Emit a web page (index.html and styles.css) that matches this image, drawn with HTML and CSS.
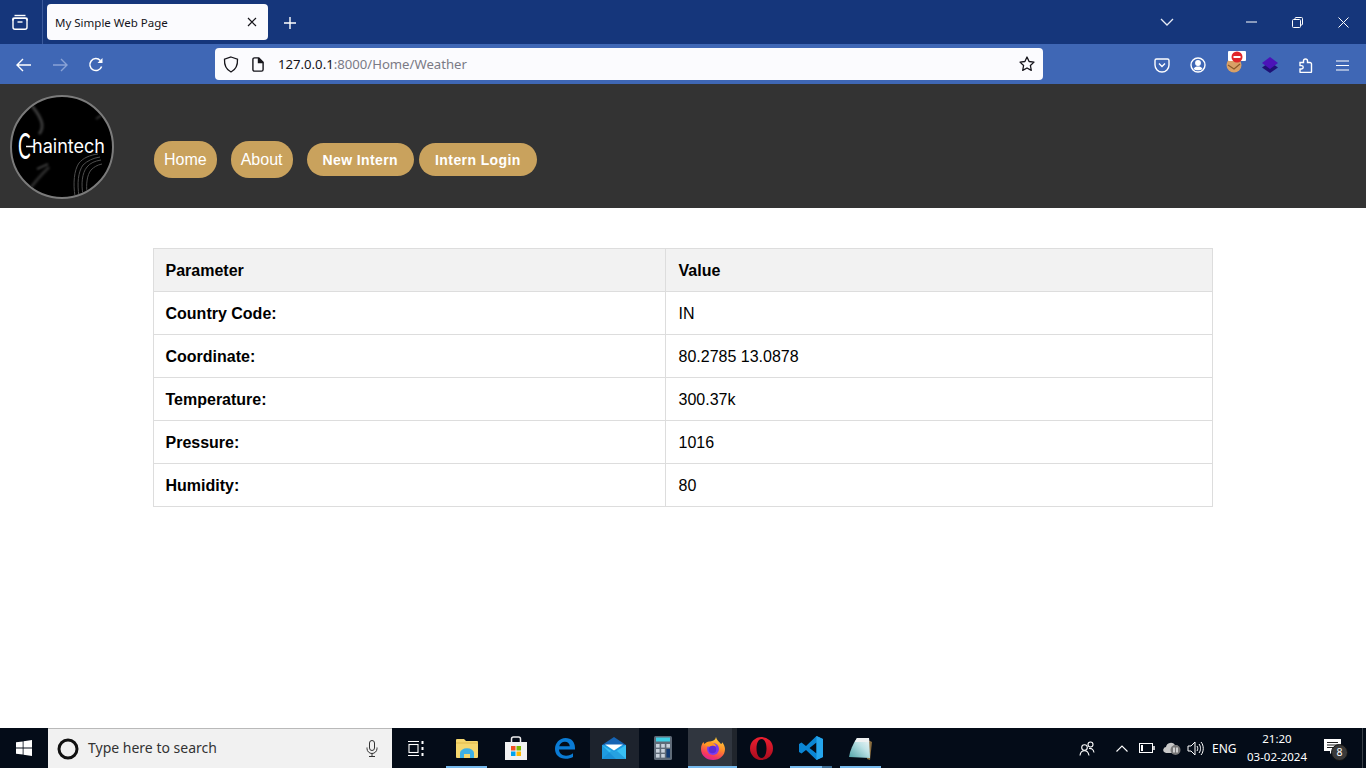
FILE: index.html
```html
<!DOCTYPE html>
<html lang="en">
<head>
<meta charset="utf-8">
<title>My Simple Web Page</title>
<link rel="stylesheet" href="styles.css">
</head>
<body>
<div class="screen">
  <div class="tabstrip">
    <div class="tabs-view"><svg width="18" height="18" viewBox="0 0 18 18" fill="none" stroke="#fff" stroke-width="1.4"><path d="M3.500 2.500h11"/><path d="M2.200 7.600a2 2 0 0 1 0-2.400h13.600a2 2 0 0 1 0 2.400"/><rect x="2" y="5.200" width="14" height="11" rx="2"/><path d="M6.500 9h5"/></svg></div>
    <div class="tab"><span class="tab-title">My Simple Web Page</span><svg class="tab-close" width="10" height="10" viewBox="0 0 10 10" stroke="#15141a" stroke-width="1.2"><path d="M1 1l8 8M9 1l-8 8"/></svg></div>
    <div class="newtab"><svg width="14" height="14" viewBox="0 0 14 14" stroke="#fff" stroke-width="1.4"><path d="M7 1v12M1 7h12"/></svg></div>
    <div class="chevron"><svg width="14" height="8" viewBox="0 0 14 8" fill="none" stroke="#e8ecf5" stroke-width="1.3"><path d="M1 1l6 6 6-6"/></svg></div>
    <div class="winbtn"><svg width="11" height="2" viewBox="0 0 11 2" stroke="#fff"><path d="M0 1h11"/></svg></div>
    <div class="winbtn"><svg width="11" height="11" viewBox="0 0 11 11" fill="none" stroke="#fff"><rect x="0.5" y="2.5" width="8" height="8" rx="1"/><path d="M3 2.500V1.500a1 1 0 0 1 1-1h5.500a1 1 0 0 1 1 1V7a1 1 0 0 1-1 1h-1"/></svg></div>
    <div class="winbtn"><svg width="11" height="11" viewBox="0 0 11 11" stroke="#fff"><path d="M.5.5l10 10M10.500.5l-10 10"/></svg></div>
  </div>

  <div class="toolbar">
    <div class="tbtn"><svg width="16" height="14" viewBox="0 0 16 14" fill="none" stroke="#fff" stroke-width="1.4"><path d="M15 7H1.500M7 1L1 7l6 6"/></svg></div>
    <div class="tbtn"><svg width="16" height="14" viewBox="0 0 16 14" fill="none" stroke="#8aa3d6" stroke-width="1.4"><path d="M1 7h13.500M9 1l6 6-6 6"/></svg></div>
    <div class="tbtn"><svg width="16" height="16" viewBox="0 0 16 16" fill="none" stroke="#fff" stroke-width="1.5"><path d="M13.600 9.500A6 6 0 1 1 12.300 3.500"/><path d="M14.500 1v5h-5z" fill="#fff" stroke="none"/></svg></div>
    <div class="urlbar">
      <svg class="shield" width="16" height="17" viewBox="0 0 16 17" fill="none" stroke="#15141a" stroke-width="1.3"><path d="M8 1l6.500 2.200c.3 5.800-1.600 10.300-6.500 12.800C3.100 13.500 1.200 9 1.500 3.200z"/></svg>
      <svg class="page" width="12" height="15" viewBox="0 0 12 15" fill="none" stroke="#15141a" stroke-width="1.4"><path d="M2.500.9h4.300l4.300 4.300v7.300a1.600 1.600 0 0 1-1.600 1.600H2.500A1.600 1.600 0 0 1 .9 12.500V2.500A1.600 1.600 0 0 1 2.500.9z"/><path d="M6.500.9v4.600h4.600" fill="#15141a"/></svg>
      <span class="url"><span class="url-host">127.0.0.1</span>:8000/Home/Weather</span>
      <svg class="star" width="16" height="16" viewBox="0 0 16 16" fill="none" stroke="#15141a" stroke-width="1.3" stroke-linejoin="round"><path d="M8 1l2.100 4.500 4.900.6-3.600 3.400.9 4.900L8 12l-4.300 2.400.9-4.900L1 6.100l4.900-.6z"/></svg>
    </div>
    <div class="tools">
      <div class="tbtn"><svg width="16" height="15" viewBox="0 0 16 15" fill="none" stroke="#fff" stroke-width="1.4"><path d="M2.500 1h11A1.500 1.500 0 0 1 15 2.500V7a7 7 0 0 1-14 0V2.500A1.500 1.500 0 0 1 2.500 1z"/><path d="M5 5.500l3 3 3-3"/></svg></div>
      <div class="tbtn"><svg width="16" height="16" viewBox="0 0 16 16" fill="none" stroke="#fff" stroke-width="1.400"><circle cx="8" cy="8" r="7"/><circle cx="8" cy="6" r="2.200" fill="#fff"/><path d="M3.500 12c1-2 2.500-2.500 4.500-2.500s3.500.5 4.500 2.500c-2 1.700-7 1.700-9 0z" fill="#fff" stroke="none"/></svg></div>
      <div class="tbtn ext-btn"><svg width="24" height="22" viewBox="0 0 24 22"><circle cx="12" cy="14" r="7.500" fill="#d9a066"/><path d="M6 14l6 4 6-5" fill="none" stroke="#8a5a2b" stroke-width="1.200"/><rect x="6" y="0" width="18" height="10" rx="1" fill="#fff"/><circle cx="15" cy="6" r="5.500" fill="#e0262b"/><rect x="11.500" y="5" width="7" height="2" fill="#fff"/></svg></div>
      <div class="tbtn"><svg width="16" height="16" viewBox="0 0 16 16"><path d="M8 5L16 10.500 8 16 0 10.500z" fill="#1f1075"/><path d="M8 0L16 6 8 12 0 6z" fill="#4b12b8"/></svg></div>
      <div class="tbtn"><svg width="14" height="16" viewBox="0 0 14 16" fill="none" stroke="#fff" stroke-width="1.4"><path d="M1 5.500h3.500V4a2 2 0 1 1 4 0v1.500h2.500a1.500 1.500 0 0 1 1.500 1.500v7.500a1 1 0 0 1-1 1H1.500a.5.5 0 0 1-.5-.5v-3h1.500a1.700 1.700 0 0 0 0-3.400H1z"/></svg></div>
      <div class="tbtn"><svg width="13" height="11" viewBox="0 0 13 11" stroke="#fff" stroke-width="1.200"><path d="M0 1h13M0 5.500h13M0 10h13"/></svg></div>
    </div>
  </div>

  <header class="site-header">
    <div class="logo">
      <svg class="logo-art" width="100" height="100" viewBox="0 0 100 100" fill="none">
        <g class="logo-streaks-soft"><path d="M20 9c5 6 9 12 10 18 .5 5-1 8-3 10" stroke="#3a3a3a" stroke-width="3"/><path d="M84 22l10-7" stroke="#333" stroke-width="2"/><path d="M15 96c8-12 16-20 22-26" stroke="#2c2c2c" stroke-width="3"/><path d="M25 72l11-5" stroke="#4c4c4c" stroke-width="1.500"/></g>
        <g class="logo-streaks" stroke="#4e4e4e" stroke-width="1"><path d="M63 99c-2-12-1-26 4-33 4-5 11-8 19-9"/><path d="M67 99c-2-12-1-24 4-31 4-4 10-7 17-8"/><path d="M71 98c-2-11-1-22 4-28 3-4 8-6 14-7"/><path d="M75 96c-1-9 0-18 4-23 3-3 6-5 11-6"/></g>
        <path class="logo-bar" d="M14 49.500h8" stroke="#fff" stroke-width="1.600"/>
        <text transform="translate(6 62) scale(.52 1)" class="logo-c">C</text>
        <text x="20" y="56" textLength="73" lengthAdjust="spacingAndGlyphs" class="logo-text">haintech</text>
      </svg>
    </div>
    <nav class="nav">
      <a class="pill" href="#">Home</a>
      <a class="pill" href="#">About</a>
      <a class="pill pill-bold pill-new" href="#">New Intern</a>
      <a class="pill pill-bold pill-login" href="#">Intern Login</a>
    </nav>
  </header>

  <main class="content">
    <table class="weather">
      <colgroup><col class="col-param"><col></colgroup>
      <thead><tr class="head"><th>Parameter</th><th>Value</th></tr></thead>
      <tbody>
        <tr><th>Country Code:</th><td>IN</td></tr>
        <tr><th>Coordinate:</th><td>80.2785 13.0878</td></tr>
        <tr><th>Temperature:</th><td>300.37k</td></tr>
        <tr><th>Pressure:</th><td>1016</td></tr>
        <tr><th>Humidity:</th><td>80</td></tr>
      </tbody>
    </table>
  </main>

  <footer class="taskbar">
    <div class="start"><svg width="16" height="16" viewBox="0 0 16 16" fill="#fff"><path d="M0 2.300l6.700-.9v6.100H0zM7.500 1.300L16 0v7.500H7.500zM0 8.400h6.700v6.200L0 13.700zM7.500 8.400H16V16l-8.500-1.200z"/></svg></div>
    <div class="search">
      <svg class="cortana" width="22" height="22" viewBox="0 0 22 22" fill="none"><circle cx="11" cy="11" r="9" stroke="#111" stroke-width="3"/></svg>
      <span class="search-text">Type here to search</span>
      <svg class="mic" width="12" height="17" viewBox="0 0 12 17" fill="none" stroke="#333" stroke-width="1"><rect x="3.500" y="0.500" width="5" height="10" rx="2.500"/><path d="M1 7.500v1a5 5 0 0 0 10 0v-1M6 13.500v3M3 16.500h6"/></svg>
    </div>
    <div class="taskview"><svg width="17" height="15" viewBox="0 0 17 15" fill="none" stroke="#fff" stroke-width="1.100"><path d="M0 .5h11M0 14.500h11"/><rect x="1" y="3.500" width="9" height="8"/><path d="M14.500 0v3M14.500 6v3M14.500 12v3" stroke-width="2"/></svg></div>

    <div class="task running"><svg width="22" height="20" viewBox="0 0 22 20"><path d="M0 2a1 1 0 0 1 1-1h7l2 2h11a1 1 0 0 1 1 1v15a1 1 0 0 1-1 1H1a1 1 0 0 1-1-1z" fill="#f5d76e"/><path d="M0 5h22" stroke="#e0b94a"/><path d="M4 20v-5a6 4 0 0 1 14 0v5h-4v-4h-6v4z" fill="#3db0e6"/></svg></div>
    <div class="task"><svg width="24" height="24" viewBox="0 0 24 24"><path d="M7.500 6V3a2 2 0 0 1 2-2h5a2 2 0 0 1 2 2v3" fill="none" stroke="#eee" stroke-width="1.500"/><rect x="1" y="6" width="22" height="18" fill="#f2f2f2"/><rect x="7" y="10" width="4.500" height="4.500" fill="#f25022"/><rect x="12.500" y="10" width="4.500" height="4.500" fill="#7fba00"/><rect x="7" y="15.500" width="4.500" height="4.500" fill="#00a4ef"/><rect x="12.500" y="15.500" width="4.500" height="4.500" fill="#ffb900"/></svg></div>
    <div class="task"><svg width="22" height="22" viewBox="0 0 22 22" fill="none"><path d="M19.500 12.500H5c.3 4 3.200 6.200 7 6.200 3 0 5.300-1 7-2.500v3.800c-2 1.200-4.500 1.800-7.500 1.800C5.500 21.800 1 17.800 1 12 1 6 5.500 1 11.500 1c6 0 9.500 4 9.500 10v1.500zM5.200 9.200h10.600c-.2-2.700-2-4.500-4.800-4.500-2.900 0-5.200 1.800-5.800 4.500z" fill="#0a7bd4"/></svg></div>
    <div class="task lit"><svg width="24" height="22" viewBox="0 0 24 22"><path d="M0 8L12 0l12 8z" fill="#1664b4"/><rect y="8" width="24" height="14" fill="#1e9be0"/><path d="M3 7.500h18L12 13.500z" fill="#fff"/><path d="M0 8l12 7.500L24 8v14H14z" fill="#38c0f4"/><path d="M0 22l9-8 3 1.500 3-1.500 9 8z" fill="#1787cf" opacity=".55"/></svg></div>
    <div class="task"><svg width="18" height="24" viewBox="0 0 18 24"><rect width="18" height="24" rx="1.500" fill="#5f6b78"/><rect x="2" y="1.500" width="14" height="4" fill="#3fd0e6"/><g fill="#c9d2dc"><rect x="2" y="8" width="3.600" height="3.600"/><rect x="7.200" y="8" width="3.600" height="3.600"/><rect x="2" y="13" width="3.600" height="3.600"/><rect x="7.200" y="13" width="3.600" height="3.600"/><rect x="2" y="18" width="3.600" height="3.600"/><rect x="7.200" y="18" width="3.600" height="3.600"/><rect x="12.400" y="8" width="3.600" height="3.600"/></g><rect x="12.400" y="13" width="3.600" height="8.600" fill="#123a73"/></svg></div>
    <div class="task active"><svg width="24" height="23" viewBox="0 0 24 23"><defs><linearGradient id="foxBody" x1="0.700" y1="0" x2="0.300" y2="1"><stop offset="0" stop-color="#ffd23c"/><stop offset=".45" stop-color="#ff8a2a"/><stop offset=".8" stop-color="#f5375f"/><stop offset="1" stop-color="#d6249f"/></linearGradient></defs><path d="M15 0c.5 3 3 4.500 5 7 .8-.3 1.200-1 1.300-1.800C23 7.500 24 10 24 12c0 6.300-5 11-12 11S0 18.300 0 12c0-3 1-5.500 2.500-7 .2 1 .6 1.800 1.400 2.300C5 5 7 4.200 9 4.500 12 4 14.500 3 15 0z" fill="url(#foxBody)"/><circle cx="12" cy="12" r="6" fill="#7b3cf0"/><path d="M3 7.500c2-2 5-3 8-2 2.500.6 4 2.500 4 4-2-1-4-1-5 .5L7 9.500z" fill="#ff9a1f"/><circle cx="11.500" cy="12.500" r="3.800" fill="#5d2bd6"/></svg></div>
    <div class="task"><svg width="23" height="23" viewBox="0 0 23 23"><defs><linearGradient id="operaRed" x1="0" y1="0" x2="0" y2="1"><stop offset="0" stop-color="#ef1f30"/><stop offset="1" stop-color="#a80c1e"/></linearGradient></defs><path fill-rule="evenodd" d="M11.500 0a11.500 11.500 0 1 0 0 23 11.500 11.500 0 0 0 0-23zm0 2c3 0 5 4 5 9.500s-2 9.500-5 9.500-5-4-5-9.500 2-9.500 5-9.500z" fill="url(#operaRed)"/></svg></div>
    <div class="task running stacked"><svg width="24" height="24" viewBox="0 0 24 24"><path d="M17.500 0L24 3v18l-6.500 3L7 14l-4.500 3.500L0 16v-8l2.500-1.500L7 10zM17.500 6.500L10.500 12l7 5.500z" fill="#0b86d4"/><path d="M17.500 0L24 3v18l-6.500 3z" fill="#25a5ec"/></svg></div>
    <div class="task running"><svg width="24" height="23" viewBox="0 0 24 23"><defs><linearGradient id="padFill" x1="0" y1="1" x2="1" y2="0"><stop offset="0" stop-color="#4fa3a8"/><stop offset=".6" stop-color="#bfe3e6"/><stop offset="1" stop-color="#f4f7f7"/></linearGradient></defs><path d="M20 3l4 2-2 18-3-1z" fill="#8a6d3e"/><path d="M9 1h12l1 20-21-1c1-7 4-13 8-19z" fill="url(#padFill)"/><path d="M9 1h12l.2 4H6.600z" fill="#eef1f1"/></svg></div>

    <div class="tray">
      <div class="tray-people"><svg width="16" height="15" viewBox="0 0 16 15" fill="none" stroke="#fff" stroke-width="1.100"><circle cx="5.500" cy="6.500" r="2.800"/><circle cx="11.500" cy="3.500" r="2.500"/><path d="M1 14.500c.3-3 2-4.800 4.500-4.800s4 1.800 4.500 4.800M10 7.500c2.500-.5 4.500 1 5 4"/></svg></div>
      <div class="tray-up"><svg width="12" height="7" viewBox="0 0 12 7" fill="none" stroke="#fff" stroke-width="1.100"><path d="M.5 6.500l5.500-5.500 5.500 5.500"/></svg></div>
      <div class="tray-bat"><svg width="16" height="10" viewBox="0 0 16 10" fill="none" stroke="#fff"><rect x="0.500" y="0.500" width="13" height="9"/><path d="M15 3v4" stroke-width="1.500"/><rect x="2" y="2" width="2" height="6" fill="#fff" stroke="none"/></svg></div>
      <div class="tray-cloud"><svg width="18" height="14" viewBox="0 0 18 14"><path d="M1 11a3 3 0 0 1 2-5 5 5 0 0 1 9-2 4 4 0 0 1 4 4l-6 4H3z" fill="#c8c8c8"/><circle cx="12.500" cy="9" r="5" fill="#777"/><path d="M11 6.500v5M14 6.500v5" stroke="#fff" stroke-width="1.300"/></svg></div>
      <div class="tray-vol"><svg width="17" height="15" viewBox="0 0 17 15" fill="none" stroke="#fff" stroke-width="1"><path d="M1 5h3l4-4v13l-4-4H1z"/><path d="M10 5c1 1.500 1 3.500 0 5M12 3c2 2.500 2 6.500 0 9M14 1c3 3.500 3 9.500 0 13"/></svg></div>
      <span class="tray-lang">ENG</span>
      <div class="clock"><span>21:20</span><span>03-02-2024</span></div>
      <div class="notify">
        <svg width="17" height="15" viewBox="0 0 17 15"><path d="M0 0h17v12H9l-3 3v-3H0z" fill="#fff"/><path d="M3 3.500h11M3 6h11M3 8.500h7" stroke="#222"/></svg>
        <span class="badge">8</span>
      </div>
      <div class="desk"></div>
    </div>
  </footer>
</div>
</body>
</html>
```
FILE: styles.css
```css
* { box-sizing: border-box; }
html, body { margin: 0; height: 100%; overflow: hidden; background: #fff; }
body { font-family: "Liberation Sans", Arial, sans-serif; }
svg { display: block; flex: none; }

.screen { width: 1366px; height: 768px; display: flex; flex-direction: column; }

/* browser tab strip */
.tabstrip { height: 44px; flex: none; background: #15367b; display: flex; align-items: stretch; }
.tabs-view { width: 43px; height: 44px; border-right: 1px solid #3b5a9c; display: flex; align-items: center; justify-content: center; padding-right: 2px; }
.tab { width: 221px; height: 36px; margin: 4px 0 0 4px; background: #fbfbfe; border-radius: 4px; display: flex; align-items: center; padding: 0 11px 0 8px; }
.tab-title { flex: 1; font: 11.500px "Noto Sans", "Open Sans", sans-serif; color: #15141a; white-space: nowrap; }
.newtab { width: 36px; margin-left: 4px; padding-top: 2px; display: flex; align-items: center; justify-content: center; }
.chevron { width: 36px; margin-left: auto; margin-right: 43px; display: flex; align-items: center; justify-content: center; }
.winbtn { width: 46px; display: flex; align-items: center; justify-content: center; }

/* browser toolbar */
.toolbar { height: 40px; flex: none; background: #3f67b5; display: flex; align-items: center; padding: 0 6px; }
.tbtn { width: 36px; height: 32px; padding-top: 2px; display: flex; align-items: center; justify-content: center; }
.ext-btn { align-items: flex-start; padding-top: 3px; }
.urlbar { width: 828px; height: 32px; margin-left: 101px; background: #fbfbfe; border-radius: 4px; display: flex; align-items: center; padding: 0 8px; }
.shield { margin-right: 13px; }
.page { margin-right: 14px; }
.url { flex: 1; font: 13.150px "Noto Sans", "Open Sans", sans-serif; color: #7a7a85; white-space: nowrap; }
.url-host { color: #15141a; }
.tools { margin-left: auto; display: flex; }

/* site header */
.site-header { height: 124px; flex: none; background: #333; display: flex; padding: 11px 0 30px 10px; }
.logo { width: 104px; height: 104px; flex: none; border-radius: 50%; border: 2px solid #7b7b7b; background: #000; overflow: hidden; }
.logo-c { font: 400 36px Lato, "Noto Sans", sans-serif; fill: #fff; }
.logo-text { font: 400 18.500px Inter, Lato, sans-serif; fill: #fff; }
.logo-streaks-soft { filter: blur(1px); }
.nav { margin-left: 40px; align-self: flex-end; display: flex; align-items: center; }
.pill { color: #fff; text-decoration: none; background: #c9a25d; border-radius: 18px; font-size: 16px; line-height: 37px; padding: 0 10px; margin-right: 14px; }
.pill-bold { font-weight: 700; font-size: 14px; line-height: 33px; padding: 1px 16px 0; height: 33px; letter-spacing: .4px; }
.pill-new { margin-right: 5px; }
.pill-login { margin-right: 0; }

/* weather table */
.content { flex: 1; padding: 40px 153px 0; }
.weather { width: 1060px; border-collapse: collapse; table-layout: fixed; font-size: 16px; color: #000; }
.col-param { width: 512px; }
.weather th, .weather td { border: 1px solid #ddd; padding: 13px 12px 11px 11.500px; line-height: 18px; text-align: left; }
.weather td, .head th + th { padding-left: 12.500px; }
.head th { background: #f2f2f2; }
.weather td { font-weight: 400; }

/* windows taskbar */
.taskbar { height: 40px; flex: none; background: #040c18; display: flex; font-family: "Noto Sans", "Open Sans", sans-serif; }
.start { width: 48px; display: flex; align-items: center; justify-content: center; }
.search { width: 344px; background: #f1f1f1; border-top: 1px solid #b9b9b9; display: flex; align-items: center; padding: 0 14px 0 9px; }
.cortana { margin-right: 9px; }
.search-text { flex: 1; font-size: 14px; color: #333; padding-bottom: 2px; }
.taskview { width: 50px; padding-right: 2px; display: flex; align-items: center; justify-content: center; }
.task { width: 49.200px; display: flex; align-items: center; justify-content: center; position: relative; }
.task.running::after, .task.active::after { content: ""; position: absolute; left: 4px; right: 4px; bottom: 0; height: 2px; background: #76b9ed; }
.task.active::after { left: 0; right: 0; }
.task.stacked::after { background: linear-gradient(to right, #76b9ed 76%, #3e6d93 76%); }
.task.lit { background: #1d232d; }
.task.active { background: linear-gradient(to right, #30363f 44px, #20252c 44px); }

.tray { margin-left: auto; display: flex; align-items: center; color: #fff; }
.tray-people { width: 16px; margin-right: 21px; }
.tray-up { margin-right: 11px; }
.tray-bat { margin-right: 8px; }
.tray-cloud { margin-right: 6px; }
.tray-vol { margin-right: 8px; }
.tray-lang { font-size: 12px; width: 28px; margin-right: 5px; }
.clock { width: 64px; display: flex; flex-direction: column; align-items: center; font-size: 11.500px; line-height: 18px; margin-right: 15px; white-space: nowrap; }
.notify { width: 24px; height: 24px; position: relative; padding-top: 3px; margin-right: 14px; }
.badge { position: absolute; left: 7px; top: 8px; width: 17px; height: 17px; border-radius: 50%; background: #3a3a3a; border: 1px solid #111; font-size: 10.500px; line-height: 15px; text-align: center; color: #fff; }
.desk { width: 1px; height: 40px; background: #3a4048; margin-right: 3px; }
```
